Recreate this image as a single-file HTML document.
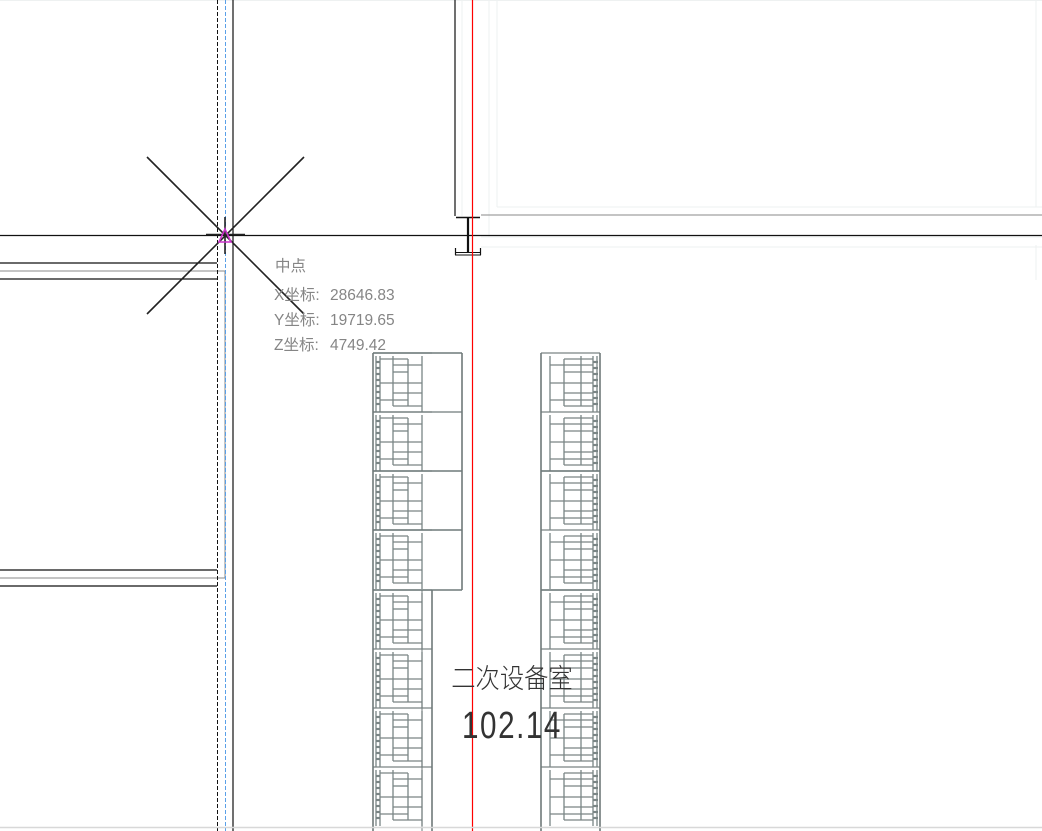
<!DOCTYPE html>
<html><head><meta charset="utf-8"><style>
html,body{margin:0;padding:0;background:#fff;width:1042px;height:831px;overflow:hidden}
svg{display:block}
</style></head><body>
<svg width="1042" height="831" viewBox="0 0 1042 831" xmlns="http://www.w3.org/2000/svg">
<defs>
<g id="lu" stroke="#7a8585" stroke-width="1.3" fill="none">
  <line x1="373" y1="353" x2="432" y2="353"/>
  <line x1="376" y1="356" x2="376" y2="412"/>
  <line x1="380" y1="356" x2="380" y2="412"/>
  <line x1="393" y1="356" x2="393" y2="406"/>
  <line x1="408" y1="359" x2="408" y2="406"/>
  <line x1="422" y1="356" x2="422" y2="412"/>
  <line x1="380" y1="359" x2="408" y2="359"/>
  <line x1="393" y1="365" x2="422" y2="365"/>
  <line x1="393" y1="372" x2="408" y2="372"/>
  <line x1="380" y1="383" x2="422" y2="383"/>
  <line x1="393" y1="393" x2="422" y2="393"/>
  <line x1="380" y1="400" x2="408" y2="400"/>
  <line x1="393" y1="406" x2="422" y2="406"/>
  <g stroke-width="2.2"><line x1="376" y1="362" x2="380" y2="362"/><line x1="376" y1="368" x2="380" y2="368"/><line x1="376" y1="374" x2="380" y2="374"/><line x1="376" y1="380" x2="380" y2="380"/><line x1="376" y1="386" x2="380" y2="386"/><line x1="376" y1="392" x2="380" y2="392"/><line x1="376" y1="398" x2="380" y2="398"/><line x1="376" y1="404" x2="380" y2="404"/></g>
</g>
<g id="ru" stroke="#7a8585" stroke-width="1.3" fill="none">
  <line x1="541" y1="353" x2="600" y2="353"/>
  <line x1="550" y1="356" x2="550" y2="412"/>
  <line x1="564" y1="359" x2="564" y2="406"/>
  <line x1="581" y1="356" x2="581" y2="406"/>
  <line x1="593" y1="356" x2="593" y2="412"/>
  <line x1="597" y1="356" x2="597" y2="412"/>
  <line x1="564" y1="359" x2="593" y2="359"/>
  <line x1="550" y1="365" x2="593" y2="365"/>
  <line x1="564" y1="372" x2="593" y2="372"/>
  <line x1="550" y1="383" x2="593" y2="383"/>
  <line x1="564" y1="393" x2="593" y2="393"/>
  <line x1="550" y1="400" x2="593" y2="400"/>
  <line x1="564" y1="406" x2="593" y2="406"/>
  <g stroke-width="2.2"><line x1="593" y1="362" x2="598" y2="362"/><line x1="593" y1="368" x2="598" y2="368"/><line x1="593" y1="374" x2="598" y2="374"/><line x1="593" y1="380" x2="598" y2="380"/><line x1="593" y1="386" x2="598" y2="386"/><line x1="593" y1="392" x2="598" y2="392"/><line x1="593" y1="398" x2="598" y2="398"/><line x1="593" y1="404" x2="598" y2="404"/></g>
</g>
</defs>
<g stroke="#eef1f1" stroke-width="1" fill="none">
  <line x1="489" y1="0" x2="489" y2="237"/>
  <line x1="497" y1="0" x2="497" y2="207"/>
  <line x1="1036" y1="0" x2="1036" y2="207"/>
  <line x1="497" y1="207" x2="1042" y2="207"/>
  <line x1="481" y1="237" x2="1042" y2="237"/>
  <line x1="481" y1="247" x2="1042" y2="247"/>
  <line x1="1036" y1="245" x2="1036" y2="280"/>
  <line x1="462" y1="0" x2="462" y2="216"/>
  <line x1="0" y1="0.5" x2="1042" y2="0.5"/>
</g>
<line x1="481" y1="215" x2="1042" y2="215" stroke="#a0a0a0" stroke-width="1.2"/>
<g stroke="#111" stroke-width="1.2">
  <line x1="0" y1="263" x2="217" y2="263"/>
  <line x1="0" y1="279" x2="217" y2="279"/>
  <line x1="0" y1="570" x2="217" y2="570"/>
  <line x1="0" y1="586" x2="217" y2="586"/>
  <line x1="233" y1="0" x2="233" y2="831"/>
  <line x1="455" y1="0" x2="455" y2="216"/>
</g>
<g stroke="#888" stroke-width="1">
  <line x1="0" y1="271" x2="225" y2="271"/>
  <line x1="0" y1="578" x2="225" y2="578"/>
  <line x1="225" y1="271" x2="225" y2="578"/>
</g>
<line x1="217.5" y1="0" x2="217.5" y2="831" stroke="#111" stroke-width="1" stroke-dasharray="4,2"/>
<line x1="225.5" y1="0" x2="225.5" y2="831" stroke="#5aa0e8" stroke-width="1" stroke-dasharray="4,2"/>
<line x1="0" y1="235.5" x2="1042" y2="235.5" stroke="#111" stroke-width="1.2"/>
<g stroke="#111" fill="none">
  <line x1="456" y1="217.5" x2="480" y2="217.5" stroke-width="1.5"/>
  <line x1="468" y1="217" x2="468" y2="253" stroke-width="2.2"/>
  <line x1="455.5" y1="248" x2="455.5" y2="255" stroke-width="1.2"/>
  <line x1="480.5" y1="248" x2="480.5" y2="255" stroke-width="1.2"/>
  <line x1="455" y1="252.5" x2="481" y2="252.5" stroke-width="1"/>
  <line x1="455" y1="255" x2="481" y2="255" stroke-width="1"/>
</g>
<use href="#lu"/>
<use href="#lu" y="59"/>
<use href="#lu" y="118"/>
<use href="#lu" y="177"/>
<use href="#lu" y="237"/>
<use href="#lu" y="296"/>
<use href="#lu" y="355"/>
<use href="#lu" y="414"/>
<use href="#ru"/>
<use href="#ru" y="59"/>
<use href="#ru" y="118"/>
<use href="#ru" y="177"/>
<use href="#ru" y="237"/>
<use href="#ru" y="296"/>
<use href="#ru" y="355"/>
<use href="#ru" y="414"/>
<g stroke="#6f7a7a" stroke-width="1.6" fill="none">
  <line x1="373" y1="353" x2="373" y2="831"/>
  <line x1="462" y1="353" x2="462" y2="590"/>
  <line x1="432" y1="590" x2="432" y2="831"/>
  <line x1="373" y1="353" x2="462" y2="353"/>
  <line x1="373" y1="412" x2="462" y2="412" stroke-width="1.2"/>
  <line x1="373" y1="471" x2="462" y2="471"/>
  <line x1="373" y1="530" x2="462" y2="530"/>
  <line x1="373" y1="590" x2="462" y2="590"/>
  <line x1="422" y1="590" x2="422" y2="831" stroke-width="1"/>
  <line x1="541" y1="353" x2="541" y2="831"/>
  <line x1="600" y1="353" x2="600" y2="831"/>
  <line x1="541" y1="471" x2="600" y2="471"/>
  <line x1="541" y1="590" x2="600" y2="590"/>
</g>
<line x1="472.5" y1="0" x2="472.5" y2="831" stroke="#ff0000" stroke-width="1.2"/>
<line x1="0" y1="827.5" x2="1042" y2="827.5" stroke="#d8d8d8" stroke-width="1.5"/>
<g stroke="#222" stroke-width="1.6">
  <line x1="147" y1="157" x2="304" y2="314"/>
  <line x1="304" y1="157" x2="147" y2="314"/>
  <line x1="206" y1="234.5" x2="245" y2="234.5"/>
  <line x1="225" y1="217" x2="225" y2="254"/>
</g>
<polygon points="225,229 219,242 231,242" fill="none" stroke="#cc33cc" stroke-width="1.6"/>
<g font-family="Liberation Sans, Noto Sans CJK SC, sans-serif" font-size="15.5" fill="#858585">
  <text x="275" y="271">中点</text>
  <text x="274" y="300">X坐标:</text><text x="330" y="300">28646.83</text>
  <text x="274" y="325">Y坐标:</text><text x="330" y="325">19719.65</text>
  <text x="274" y="350">Z坐标:</text><text x="330" y="350">4749.42</text>
</g>
<g font-family="Liberation Sans, Noto Sans CJK SC, sans-serif" fill="#333" font-weight="300">
  <text x="512" y="688" font-size="27" text-anchor="middle" transform="translate(512 0) scale(0.9 1) translate(-512 0)">二次设备室</text>
  <text x="512" y="738" font-size="38" text-anchor="middle" letter-spacing="2" transform="translate(512 0) scale(0.78 1) translate(-512 0)">102.14</text>
</g>
</svg>
</body></html>
